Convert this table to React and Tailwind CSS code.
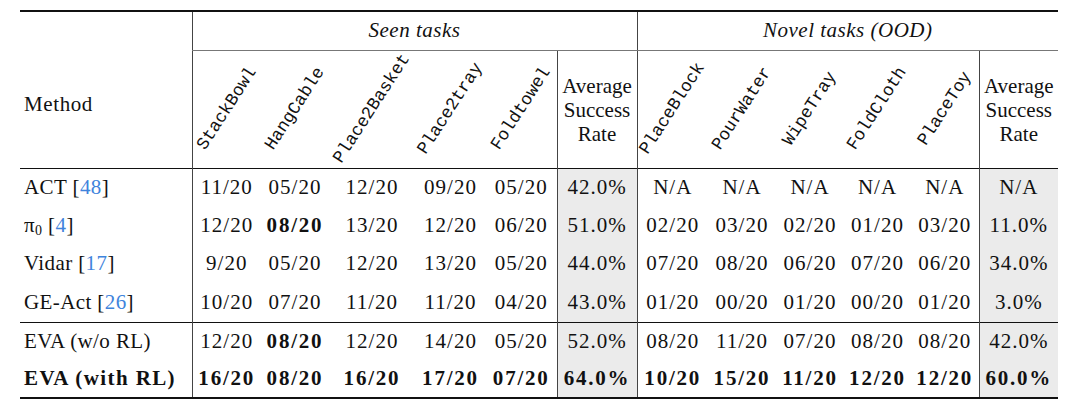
import React from 'react';

const seenTasks = ['StackBowl', 'HangCable', 'Place2Basket', 'Place2tray', 'Foldtowel'];
const novelTasks = ['PlaceBlock', 'PourWater', 'WipeTray', 'FoldCloth', 'PlaceToy'];

// column widths in px, left to right
const widths = [172, 69, 68, 86, 71, 71, 80, 71, 68, 68, 67, 68, 79];
const rowHeights = ['h-[38px]', 'h-[39px]', 'h-[38px]', 'h-[39px]', 'h-[38px]', 'h-[38px]'];

const rows = [
  {
    method: <>ACT <Cite n="48" /></>,
    seen: ['11/20', '05/20', '12/20', '09/20', '05/20'],
    seenAvg: '42.0%',
    novel: ['N/A', 'N/A', 'N/A', 'N/A', 'N/A'],
    novelAvg: 'N/A',
  },
  {
    method: <>π<sub className="text-[14px]">0</sub> <Cite n="4" /></>,
    seen: ['12/20', '08/20', '13/20', '12/20', '06/20'],
    bold: [1],
    seenAvg: '51.0%',
    novel: ['02/20', '03/20', '02/20', '01/20', '03/20'],
    novelAvg: '11.0%',
  },
  {
    method: <>Vidar <Cite n="17" /></>,
    seen: ['9/20', '05/20', '12/20', '13/20', '05/20'],
    seenAvg: '44.0%',
    novel: ['07/20', '08/20', '06/20', '07/20', '06/20'],
    novelAvg: '34.0%',
  },
  {
    method: <>GE-Act <Cite n="26" /></>,
    seen: ['10/20', '07/20', '11/20', '11/20', '04/20'],
    seenAvg: '43.0%',
    novel: ['01/20', '00/20', '01/20', '00/20', '01/20'],
    novelAvg: '3.0%',
  },
  {
    method: 'EVA (w/o RL)',
    seen: ['12/20', '08/20', '12/20', '14/20', '05/20'],
    bold: [1],
    seenAvg: '52.0%',
    novel: ['08/20', '11/20', '07/20', '08/20', '08/20'],
    novelAvg: '42.0%',
    split: true,
  },
  {
    method: 'EVA (with RL)',
    seen: ['16/20', '08/20', '16/20', '17/20', '07/20'],
    seenAvg: '64.0%',
    novel: ['10/20', '15/20', '11/20', '12/20', '12/20'],
    novelAvg: '60.0%',
    allBold: true,
  },
];

function Cite({ n }) {
  return (
    <span>
      [<span className="text-[#3f84dc]">{n}</span>]
    </span>
  );
}

function Rotated({ label }) {
  return (
    <div className="flex h-full items-center justify-center">
      <div
        className="whitespace-nowrap text-[17.5px] leading-none -rotate-[57deg]"
        style={{ fontFamily: '"Liberation Mono", monospace' }}
      >
        {label}
      </div>
    </div>
  );
}

function AvgHead() {
  return (
    <div className="flex flex-col items-center leading-[24px] pt-[2px]">
      <span>Average</span>
      <span>Success</span>
      <span>Rate</span>
    </div>
  );
}

export default function App() {
  const serif = { fontFamily: '"Liberation Serif", "Times New Roman", serif' };
  return (
    <div className="bg-white w-[1080px] h-[410px] pl-[20px] pt-[10px] text-[21px] text-[#111]" style={serif}>
      <table
        className="table-fixed border-collapse w-[1038px] border-t-2 border-b-2 border-[#111]"
        style={serif}
      >
        <colgroup>
          {widths.map((w, i) => (
            <col key={i} style={{ width: w }} />
          ))}
        </colgroup>
        <thead>
          <tr className="h-[39px]">
            <th className="p-0" />
            <th
              colSpan={6}
              className="p-0 font-normal italic tracking-[0.5px] border-l border-r border-b border-l-[#444] border-r-[#444] border-b-[#777]"
            >
              Seen tasks
            </th>
            <th
              colSpan={6}
              className="p-0 font-normal italic tracking-[0.5px] border-l border-b border-l-[#444] border-b-[#777]"
            >
              Novel tasks (OOD)
            </th>
          </tr>
          <tr className="h-[118px] border-b-[1.5px] border-[#111]">
            <th className="p-0 pl-[4px] pb-[8px] text-left font-normal tracking-[0.6px]">Method</th>
            {seenTasks.map((t, i) => (
              <th key={t} className={`p-0 font-normal h-[118px] ${i === 0 ? 'border-l border-l-[#444]' : ''}`}>
                <Rotated label={t} />
              </th>
            ))}
            <th className="p-0 font-normal border-l border-r border-[#444]">
              <AvgHead />
            </th>
            {novelTasks.map(t => (
              <th key={t} className="p-0 font-normal h-[118px]">
                <Rotated label={t} />
              </th>
            ))}
            <th className="p-0 font-normal border-l border-[#444]">
              <AvgHead />
            </th>
          </tr>
        </thead>
        <tbody>
          {rows.map((r, ri) => {
            const cellFont = r.allBold ? 'font-bold tracking-[1.8px]' : 'tracking-[1px]';
            const top = r.split ? 'border-t-[1.5px] border-t-[#111]' : '';
            return (
              <tr key={ri} className={rowHeights[ri]}>
                <td className={`p-0 pl-[4px] whitespace-nowrap ${top} ${r.allBold ? 'font-bold tracking-[1.4px]' : 'tracking-[0.4px]'}`}>
                  {r.method}
                </td>
                {r.seen.map((v, i) => (
                  <td
                    key={i}
                    className={`p-0 text-center whitespace-nowrap ${top} ${i === 0 ? 'border-l border-l-[#444]' : ''} ${
                      r.bold?.includes(i) ? 'font-bold tracking-[1.8px]' : cellFont
                    }`}
                  >
                    {v}
                  </td>
                ))}
                <td className={`p-0 text-center bg-[#ebebeb] border-l border-r border-l-[#444] border-r-[#444] ${top} ${cellFont}`}>
                  {r.seenAvg}
                </td>
                {r.novel.map((v, i) => (
                  <td key={i} className={`p-0 text-center whitespace-nowrap ${top} ${cellFont}`}>
                    {v}
                  </td>
                ))}
                <td className={`p-0 text-center bg-[#ebebeb] border-l border-l-[#444] ${top} ${cellFont}`}>
                  {r.novelAvg}
                </td>
              </tr>
            );
          })}
        </tbody>
      </table>
    </div>
  );
}
